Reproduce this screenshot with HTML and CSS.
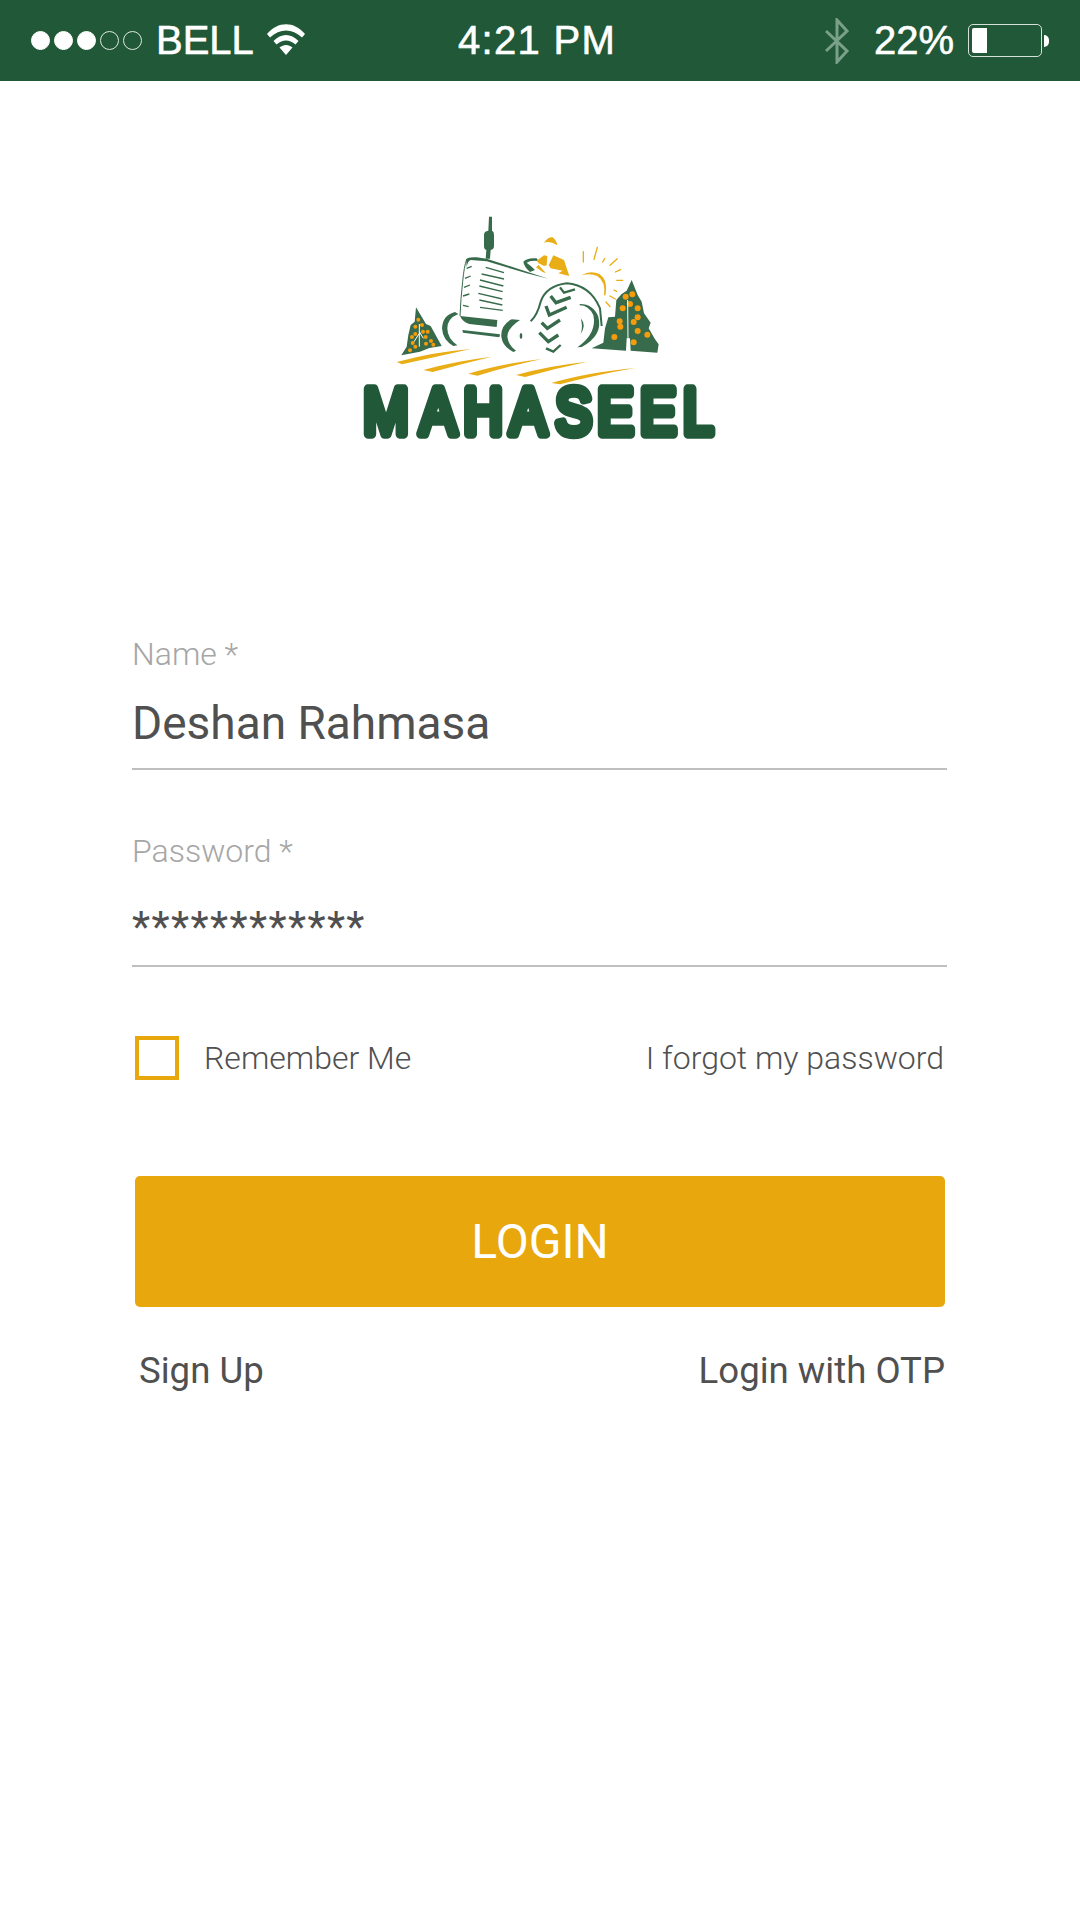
FILE: index.html
```html
<!DOCTYPE html>
<html lang="en">
<head>
<meta charset="utf-8">
<title>Mahaseel Login</title>
<link rel="stylesheet" href="styles.css">
</head>
<body>
<header class="status">
  <div class="status-left">
    <span class="signal"><i class="dot on"></i><i class="dot on"></i><i class="dot on"></i><i class="dot"></i><i class="dot"></i></span>
    <span class="carrier">BELL</span>
    <svg class="wifi" viewBox="0 0 38 31"><path class="white" d="M0 10 C11 -3 27 -3 38 10 L35 13.500 C25 4 13 4 3 13.500 Z"/><path class="white" d="M6.500 17 C14 9 24 9 31.500 17 L28.500 20.500 C22 15 16 15 9.500 20.500 Z"/><path class="white" d="M12.500 23.500 C16.500 20 21.500 20 25.500 23.500 L19 31 Z"/></svg>
  </div>
  <time class="clock">4:21 PM</time>
  <div class="status-right">
    <svg class="bt" viewBox="0 0 24 46"><path class="bt-line" d="M1 13 L22 33 L12 44 L12 2 L22 13 L1 33"/></svg>
    <span class="pct">22%</span>
    <span class="battery"><span class="battery-fill"></span></span>
    <span class="battery-nub"></span>
  </div>
</header>
<main class="page">
  <svg class="logo" viewBox="0 0 1200 780" role="img" aria-label="Mahaseel">
    <g class="leaf">
      <path d="M447 50H456V92Q462 94 462 104V138Q462 148 452 150L450 176H437L439 150Q432 148 432 138V104Q432 94 445 92Z"/>
      <path d="M228 322 L258 372 L272 378 L305 438 L268 444 L240 455 L184 466 L200 440 L205 405 L212 375 L224 365Z"/>
      <path d="M875 240 L893 285 L905 305 L912 340 L932 368 L926 385 L945 418 L956 433 L952 458 L872 452 L870 415 L860 415 L858 452 L755 445 L790 428 L795 385 L805 352 L825 350 L829 300 L845 282 L860 272Z"/>
      <path d="M378 178 Q385 170 410 172 L440 176 L625 236 L560 220 L440 184 L392 180 Q384 182 380 200 L378 175Z"/>
      <path d="M360 348 L472 360 L470 381 L388 372 Q368 366 360 348Z"/>
      <path d="M367 390 L480 403 L478 412 L369 398Z"/>
      <path d="M345 336 Q308 345 306 385 Q308 420 340 438 L352 436 Q322 415 322 385 Q322 355 355 342Z"/>
      <path d="M515 358 Q482 375 484 410 Q488 440 520 456 L528 452 Q505 435 502 410 Q502 385 540 360Z"/>
      <ellipse cx="543" cy="408" rx="4" ry="9"/>
      <path d="M718 316 Q745 315 760 345 Q772 400 712 442 L725 441 Q790 405 775 350 Q760 312 720 312Z"/>
      <path d="M722 355 Q740 375 722 402 Q730 380 722 355Z"/>
      <path d="M550 185 Q562 172 590 175 L595 183 Q570 180 560 188 L575 200 L585 210 L570 216 Q552 200 550 185Z"/>
    </g>
    <g class="slats">
      <path d="M380 205 L395 199M375 235 L392 228M372 262 L390 255M369 288 L388 282M369 316 L386 320"/>
      <path d="M437 202 L492 218M425 222 L492 237M420 240 L490 258M418 258 L488 275M415 280 L487 297M418 300 L487 315M420 322 L488 331"/>
      <path class="edge" d="M380 178 Q372 200 368 245 Q362 295 360 348"/>
      <path class="wheel" d="M572 364 Q592 345 602 305 Q618 258 680 250 Q750 255 780 325 L785 378"/>
    </g>
    <g class="chevrons">
      <path class="c-thin" d="M660 262 L672 278 L705 268"/>
      <path d="M632 288 L648 308 L692 292"/>
      <path d="M618 318 L628 345 L680 322"/>
      <path d="M605 368 L622 385 L660 360"/>
      <path d="M598 398 L625 425 L655 405"/>
      <path class="c-thin" d="M618 445 L640 455 L662 435"/>
    </g>
    <g class="sun">
      <path d="M612 128 Q625 110 638 112 Q650 122 652 136 Q630 122 612 128Z"/>
      <path d="M590 182 L612 166 L622 168 L620 196 L612 198 L596 190Z"/>
      <path d="M640 166 L672 180 L688 228 L655 220 L668 212 L632 205 L626 196Z"/>
      <path d="M596 195 L618 220 L608 216 L588 202Z"/>
      <path d="M724 226 Q750 210 778 222 Q805 240 796 286 L792 286 Q798 245 772 228 Q750 218 724 226Z"/>
    </g>
    <path class="rays" d="M730 155 L730 186M772 142 L762 178M794 176 L788 186M832 176 L810 196M842 209 L826 216M848 241 L830 241M830 274 L822 270M826 297 L810 288M810 320 L798 306"/>
    <g class="fruit">
      <circle cx="235" cy="359" r="6"/><circle cx="226" cy="380" r="6"/><circle cx="246" cy="375" r="6"/><circle cx="226" cy="402" r="6"/><circle cx="249" cy="395" r="6"/><circle cx="263" cy="395" r="6"/><circle cx="216" cy="411" r="6"/><circle cx="257" cy="411" r="6"/><circle cx="218" cy="429" r="6"/><circle cx="226" cy="440" r="6"/><circle cx="258" cy="431" r="6"/><circle cx="273" cy="423" r="6"/><circle cx="280" cy="434" r="6"/><circle cx="210" cy="451" r="6"/>
      <circle cx="877" cy="283" r="9"/><circle cx="857" cy="290" r="9"/><circle cx="870" cy="312" r="9"/><circle cx="848" cy="325" r="9"/><circle cx="893" cy="325" r="9"/><circle cx="893" cy="352" r="9"/><circle cx="881" cy="366" r="9"/><circle cx="839" cy="364" r="9"/><circle cx="841" cy="380" r="9"/><circle cx="893" cy="393" r="9"/><circle cx="922" cy="404" r="9"/><circle cx="823" cy="411" r="9"/><circle cx="881" cy="427" r="9"/>
    </g>
    <path class="trunk" d="M863 300 L864 420M238 372 L238 440M238 400 L222 425M238 395 L250 415"/>
    <g class="field">
      <path d="M170 486 Q280 456 392 447 Q290 470 186 493Z"/>
      <path d="M250 510 Q340 484 456 470 Q370 490 278 516Z"/>
      <path d="M385 521 Q480 492 605 477 Q510 498 412 527Z"/>
      <path d="M528 525 Q620 498 742 485 Q650 504 555 531Z"/>
      <path d="M634 549 Q740 518 885 504 Q770 524 660 553Z"/>
    </g>
    <text class="wordmark" transform="scale(0.85 1)" x="82 282 436 600 761 908 1059 1211" y="703">MAHASEEL</text>
  </svg>

  <form class="form">
    <div class="field-block">
      <label class="field-label">Name *</label>
      <div class="field-value">Deshan Rahmasa</div>
    </div>
    <div class="field-block second">
      <label class="field-label">Password *</label>
      <div class="field-value stars">************</div>
    </div>
    <div class="options">
      <span class="check-wrap"><span class="check"></span><span class="opt-text">Remember Me</span></span>
      <span class="opt-text">I forgot my password</span>
    </div>
    <div class="login">LOGIN</div>
    <div class="links"><span>Sign Up</span><span>Login with OTP</span></div>
  </form>
</main>
</body>
</html>
```
FILE: styles.css
```css
* { box-sizing: border-box; }
html, body { margin: 0; padding: 0; background: #fff; }
body { width: 1080px; height: 1920px; overflow: hidden; font-family: Roboto, "Liberation Sans", sans-serif; color: #505050; }

.status { height: 81px; background: #205838; color: #fff; display: grid; grid-template-columns: 1fr auto 1fr; align-items: center; font-family: "Liberation Sans", Arial, sans-serif; font-size: 40px; -webkit-text-stroke: 0.6px #fff; padding: 0 31px; }
.status-left { display: flex; align-items: center; }
.signal { display: flex; gap: 4px; }
.dot { width: 19px; height: 19px; border-radius: 50%; border: 1px solid #dfe8e3; display: block; }
.dot.on { background: #fff; border-color: #fff; }
.carrier { margin-left: 14px; }
.wifi { width: 40px; height: 31px; margin-left: 12px; margin-top: -2px; }
.white { fill: #fff; }
.clock { transform: translateX(-3px); letter-spacing: 1.3px; }
.status-right { display: flex; align-items: center; justify-content: flex-end; }
.bt { width: 24px; height: 46px; }
.bt-line { fill: none; stroke: #7ba089; stroke-width: 3; }
.pct { margin-left: 25px; }
.battery { width: 74px; height: 33px; border: 1px solid #d5e0da; border-radius: 5px; margin-left: 14px; padding: 3px; display: flex; }
.battery-fill { width: 15px; background: #fff; border-radius: 2px 0 0 2px; }
.battery-nub { width: 5px; height: 12px; background: #fff; border-radius: 0 6px 6px 0; margin-left: 2px; }

.page { display: flex; flex-direction: column; align-items: center; }
.logo { width: 400px; height: 260px; margin-top: 119px; display: block; }
.leaf path, .leaf ellipse { fill: #376b4b; }
.slats path { fill: none; stroke: #376b4b; stroke-width: 4; }
.slats .edge { stroke-width: 3; }
.slats .wheel { stroke-width: 6; }
.chevrons path { fill: none; stroke: #376b4b; stroke-width: 10; }
.chevrons .c-thin { stroke-width: 7; }
.sun path { fill: #e9ae15; }
.rays { fill: none; stroke: #e9ae15; stroke-width: 4; stroke-linecap: round; }
.fruit circle { fill: #f59c0c; }
.trunk { fill: none; stroke: #fff; stroke-width: 3; }
.field path { fill: #e9ae15; }
.wordmark { font-family: "Liberation Sans", Arial, sans-serif; font-weight: 400; font-size: 192px; fill: #205838; stroke: #205838; stroke-width: 28px; stroke-linejoin: round; stroke-linecap: round; }

.form { width: 815px; margin-top: 176px; margin-left: -1px; }
.field-block { border-bottom: 2px solid #bfbfbf; padding-bottom: 19px; }
.field-block.second { margin-top: 63px; }
.field-label { display: block; font-weight: 300; font-size: 32px; line-height: 36px; color: #a6a6a6; }
.field-value { font-size: 46px; line-height: 52px; margin-top: 25px; }
.field-value.stars { font-size: 42px; letter-spacing: 1.4px; padding-top: 7px; margin-bottom: -7px; }
.options { display: flex; justify-content: space-between; align-items: center; height: 44px; margin-top: 69px; padding: 0 3px; font-size: 32px; }
.check-wrap { display: flex; align-items: center; }
.check { width: 44px; height: 44px; border: 4px solid #e8a80d; display: block; }
.opt-text { font-weight: 300; }
.check-wrap .opt-text { margin-left: 25px; }
.login { margin: 96px 2px 0 3px; height: 131px; background: #e8a80d; border-radius: 5px; color: #fff; font-size: 48px; display: flex; align-items: center; justify-content: center; }
.links { display: flex; justify-content: space-between; margin-top: 42px; padding: 0 2px 0 7px; font-size: 36.6px; line-height: 44px; }
```
